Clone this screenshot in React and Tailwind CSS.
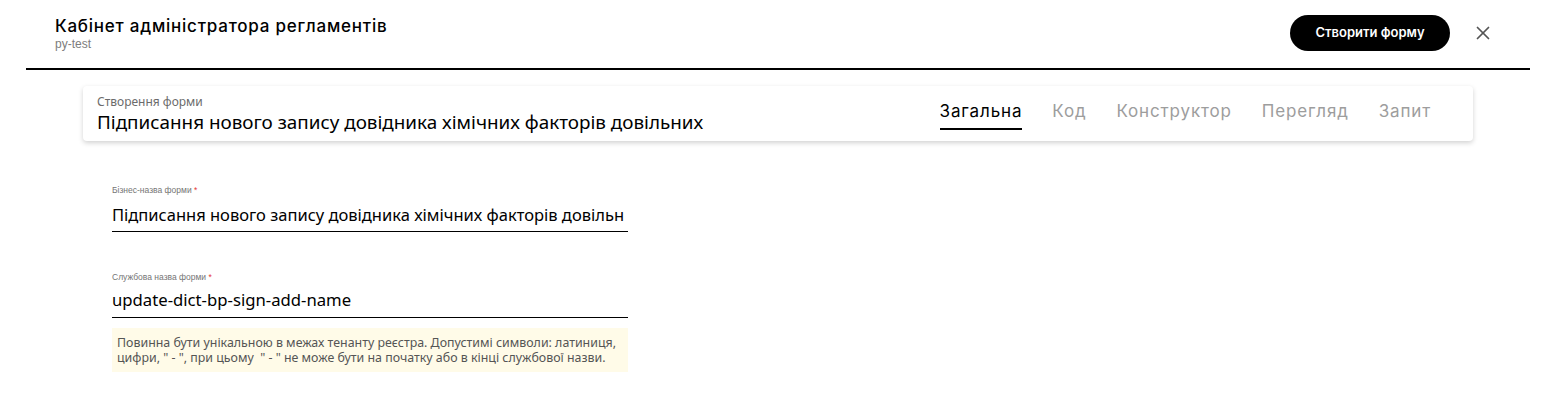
import { X } from "lucide-react";

const TABS = ["Загальна", "Код", "Конструктор", "Перегляд", "Запит"];

export default function App() {
  return (
    <div className="min-h-[414px] w-full bg-white font-['Noto_Sans',Arial,sans-serif]">
      {/* HEADER */}
      <div className="ml-[26px] mr-[33px] flex h-[70px] items-center justify-between border-b-2 border-black pl-[29px] pr-[36px]">
        <div className="flex flex-col pb-[3px]">
          <h1 className="font-['Inter',sans-serif] text-[17px] leading-[22px] font-medium tracking-[0.045em] text-black">
            Кабінет адміністратора регламентів
          </h1>
          <p className="font-['Liberation_Sans',sans-serif] text-[12px] leading-[14px] text-[#7d7d7d]">py-test</p>
        </div>
        <div className="flex items-center gap-[22px] pb-[3px]">
          <button className="h-[36px] w-[160px] rounded-full bg-black font-['Inter',sans-serif] text-[13px] font-semibold text-white">
            Створити форму
          </button>
          <X className="h-[22px] w-[22px] text-[#555]" strokeWidth={1.9} />
        </div>
      </div>

      {/* CARD */}
      <div className="mx-[83px] mt-[16px] flex h-[55px] w-[1390px] items-center justify-between rounded-[4px] bg-white pl-[14px] pr-[42px] shadow-[0_2px_5px_rgba(0,0,0,0.18)]">
        <div className="flex flex-col">
          <span className="text-[12px] leading-[14px] text-[#6b6b6b]">Створення форми</span>
          <span className="mt-[2px] text-[18.85px] leading-[22px] text-black">
            Підписання нового запису довідника хімічних факторів довільних
          </span>
        </div>
        <div className="flex items-center gap-[30px] pt-[2px] font-['Inter',sans-serif] text-[17px] tracking-[0.05em]">
          {TABS.map((tab, idx) => (
            <span
              key={tab}
              className={
                idx === 0
                  ? "border-b-2 border-black pb-[3px] text-black"
                  : "border-b-2 border-transparent pb-[3px] text-[#9d9d9d]"
              }
            >
              {tab}
            </span>
          ))}
        </div>
      </div>

      {/* FORM */}
      <div className="ml-[112px] mt-[44px] flex w-[516px] flex-col">
        <label className="font-['Liberation_Sans',sans-serif] text-[8.5px] leading-[11px] text-[#757575]">
          Бізнес-назва форми<span className="text-[#e53935]"> *</span>
        </label>
        <div className="mt-[8px] whitespace-nowrap border-b border-black pb-[5px] text-[16.5px] leading-[22px] text-black">
          Підписання нового запису довідника хімічних факторів довільн
        </div>

        <label className="mt-[40px] font-['Liberation_Sans',sans-serif] text-[8.5px] leading-[11px] text-[#757575]">
          Службова назва форми<span className="text-[#e53935]"> *</span>
        </label>
        <div className="mt-[6px] border-b border-black pb-[6px] text-[16.7px] leading-[22px] text-black">
          update-dict-bp-sign-add-name
        </div>

        <div className="mt-[10px] bg-[#fffbe8] py-[7px] pl-[5px] pr-0 text-[12.4px] leading-[15px] text-[#555]">
          Повинна бути унікальною в межах тенанту реєстра. Допустимі символи: латиниця, цифри, " - ", при цьому&nbsp; " - " не може бути на початку або в кінці службової назви.
        </div>
      </div>
    </div>
  );
}
